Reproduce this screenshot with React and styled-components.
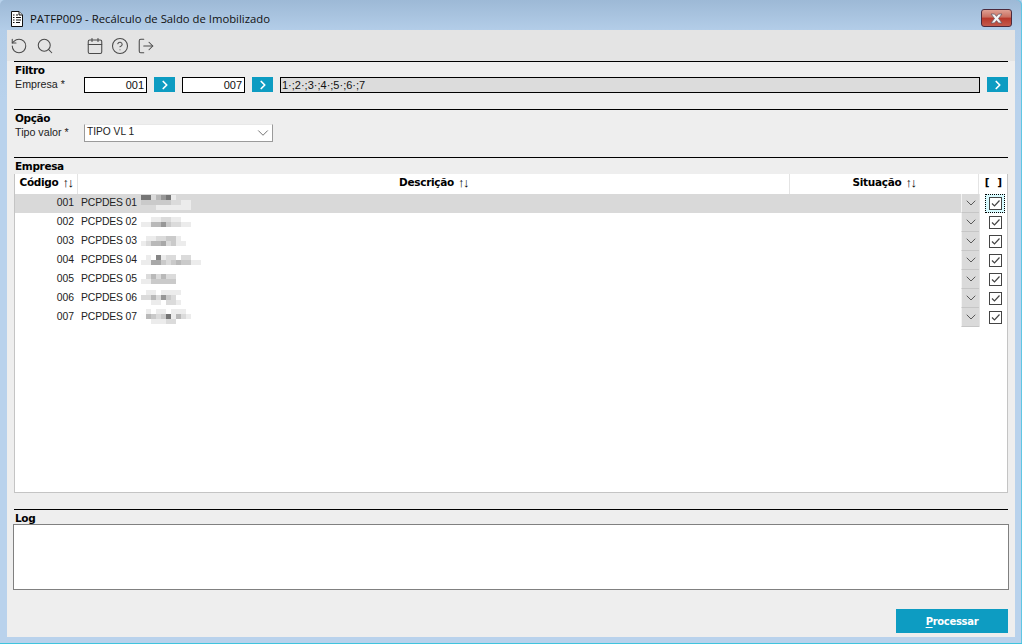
import React from 'react';
import styled, { createGlobalStyle } from 'styled-components';
import { RotateCcw, Search, Calendar, CircleHelp, LogOut, ChevronRight, ChevronDown } from 'lucide-react';

const Global = createGlobalStyle`
  html, body { margin: 0; padding: 0; width: 1022px; height: 644px; overflow: hidden; background: #b9d2ec; }
  * { box-sizing: border-box; }
  body { font-family: "Liberation Sans", Arial, sans-serif; font-size: 11px; color: #111; }
`;

const Win = styled.div`
  width: 1022px; height: 644px; display: flex; flex-direction: column;
  padding: 0 7px 6px;
  background: linear-gradient(180deg, #9db9d6 0, #b3cde8 30px, #b9d2ec 100px);
  border-bottom: 1px solid #3fc4de;
  box-shadow: inset -1px 0 0 #5fc6e4;
  border-radius: 5px 5px 0 0;
`;
const TitleBar = styled.div`
  height: 30px; display: flex; align-items: center; flex: none; padding-left: 4px; padding-top: 7px; position: relative;
`;
const TitleText = styled.span`
  margin-left: 7px; font-family: "Open Sans", "Noto Sans", sans-serif; font-size: 11.3px; color: #111;
`;
const CloseButton = styled.div`
  position: absolute; right: 3px; top: 9px; width: 31px; height: 18px; border: 1px solid #4c2a3c; border-radius: 3px;
  background: linear-gradient(180deg, #dfa093 0, #c96e5f 45%, #b8372a 50%, #c45a4c 100%);
  display: flex; align-items: center; justify-content: center;
`;
const Client = styled.div`
  flex: 1; min-height: 0; background: #eeeeee; display: flex; flex-direction: column;
`;
const Toolbar = styled.div`
  height: 31px; background: #e4e4e4; display: flex; align-items: center; padding: 1px 0 0 3px; flex: none; color: #4a4a4a;
`;
const ToolIcon = styled.span`
  display: flex; width: 18px; height: 18px; margin-left: ${p => p.$gap}px; align-items: center; justify-content: center;
`;
const Section = styled.section`
  flex: none; margin: 0 7px; height: ${p => p.$h}px; border-top: 1px solid #000;
`;
const SectionTitle = styled.div`
  font-family: "DejaVu Sans", sans-serif; font-weight: 700; font-size: 10.5px; height: ${p => p.$h || 15}px; line-height: 15px;
  padding: 1px 0 0 1px; color: #000; letter-spacing: -0.35px;
`;
const FormRow = styled.div`
  display: flex; align-items: center; height: 16px;
`;
const Label = styled.label`
  width: 70px; padding: 0 0 3px 1px; flex: none; font-size: 10.7px; color: #222;
`;
const NumInput = styled.div`
  width: 63px; height: 16px; border: 1px solid #000; background: #fff; text-align: right; line-height: 15px;
  padding-right: 2px; font-size: 11px; flex: none;
`;
const GoButton = styled.div`
  width: 21px; height: 15px; margin: 0 7px; flex: none; align-self: flex-start; background: #0d9cc2; color: #fff;
  display: flex; align-items: center; justify-content: center;
  margin-right: ${p => p.$mr ?? 7}px;
`;
const ListInput = styled.div`
  width: 700px; height: 16px; border: 1px solid #000; background: #dcdcdc; padding-left: 1px; line-height: 15px;
  font-size: 11px; flex: none;
`;
const SelectBox = styled.div`
  width: 189px; height: 18px; margin-top: -1px; background: #fff; border: 1px solid #9a9a9a; border-top-color: #e8e8e8;
  display: flex; align-items: center; justify-content: space-between; padding: 0 0 0 2px; font-size: 10.2px; color: #222; flex: none;
  span { padding-bottom: 3px; }
`;
const TableWrap = styled.div`
  height: 319px; margin-top: 1px; background: #fff; border: 1px solid #c4c4c4; border-top: 0; display: flex; flex-direction: column;
`;
const Head = styled.div`
  display: grid; grid-template-columns: 63px 712px 189px 1fr; height: 20px; flex: none;
`;
const HeadCell = styled.div`
  font-family: "DejaVu Sans", sans-serif; font-weight: 700; font-size: 10.5px; letter-spacing: -0.3px; color: #000; display: flex;
  align-items: center; justify-content: center; border-right: 1px solid #e4e4e4; line-height: 1; padding-bottom: 3px;
  &:last-child { border-right: 0; letter-spacing: 2px; padding-left: 3px; }
`;
const SortMark = styled.span`
  font-family: "Liberation Sans", sans-serif; font-weight: 400; font-size: 13px; letter-spacing: -1.5px; margin-left: 4px;
`;
const Row = styled.div`
  display: grid; grid-template-columns: 63px 883px 18px 1fr; height: 19px; flex: none;
`;
const Cell = styled.div`
  display: flex; align-items: center; font-size: 10.4px; color: #222; padding-bottom: 2px; white-space: nowrap;
  background: ${p => p.$sel ? '#d9d9d9' : '#fff'};
`;
const CodeCell = styled(Cell)`
  justify-content: flex-end; padding-right: 4px;
`;
const DescCell = styled(Cell)`
  padding-left: 3px; gap: 4px; letter-spacing: -0.15px;
`;
const ArrowCell = styled.div`
  background: #dadada; border-bottom: 1px solid #c6c6c6; border-left: 1px solid #f4f4f4; display: flex; align-items: center;
  justify-content: center; color: #444;
`;
const CheckCell = styled.div`
  display: flex; align-items: center; justify-content: center; padding-left: 3px; border-left: 1px solid #e4e4e4;
`;
const CheckFocus = styled.div`
  width: 20px; height: 19px; display: flex; align-items: center; justify-content: center;
  ${p => p.$focus && 'background:#d8fbff; outline: 1px dotted #000; outline-offset: -1px;'}
`;
const CheckBox = styled.div`
  width: 13px; height: 13px; border: 1px solid #444; background: #fff; display: flex; align-items: center; justify-content: center;
`;
const LogArea = styled.div`
  position: relative; height: 66px; margin: 0 -1px; background: #fff; border: 1px solid #808080;
`;
const Footer = styled.div`
  display: flex; justify-content: flex-end; padding: 19px 7px 0;
`;
const PrimaryButton = styled.div`
  width: 112px; height: 24px; background: #0d9cc2; color: #fff; display: flex; align-items: center; justify-content: center;
  font-family: "DejaVu Sans", sans-serif; font-weight: 700; font-size: 10px; letter-spacing: -0.3px;
  u { text-underline-offset: 2px; }
`;

const DocIcon = () => (
  <svg width="12" height="16" viewBox="0 0 12 16">
    <path d="M.5.5H8L11.500 4V15.500H.5Z" fill="#fff" stroke="#111" />
    <path d="M8 .5V4H11.500" fill="#ddd" stroke="#111" />
    <path d="M2 4H3.500M2 6.500H3.500M2 9H3.500M2 11.500H3.500M5 6.500H10M5 9H10M5 11.500H9M5 4H7" stroke="#111" strokeWidth="1.2" />
  </svg>
);
const CloseX = () => (
  <svg width="17" height="11" viewBox="0 0 17 11">
    <path d="M3 1H6.500L8.500 3.400L10.500 1H14L10.500 5.500L14 10H10.500L8.500 7.600L6.500 10H3L6.500 5.500Z" fill="#f4f4f4" stroke="#6b5a66" strokeWidth="0.8" />
  </svg>
);
const Sort = () => <SortMark>↑↓</SortMark>;
const Check = () => (
  <svg width="11" height="11" viewBox="0 0 11 11"><path d="M2 5.500L4.500 8L9.500 2.500" fill="none" stroke="#444" strokeWidth="1.200" /></svg>
);

const Blur = ({ lines }) => {
  const w = Math.max(...lines.map(l => l.length)) * 5;
  return (
    <svg width={w} height={lines.length * 5} viewBox={`0 0 ${w} ${lines.length * 5}`} shapeRendering="crispEdges" aria-hidden="true">
      {lines.map((l, y) => l.split('').map((c, x) => {
        if (c === '.') return null;
        const g = 100 + +c * 17;
        return <rect key={`${x}-${y}`} x={x * 5} y={y * 5} width="5" height="5" fill={`rgb(${g},${g},${g})`} />;
      }))}
    </svg>
  );
};

const rows = [
  ['001', ['1175318', '6666667788', '...8888888']],
  ['002', ['..887788', '8855367788', '']],
  ['003', ['.8877668', '875547688', '']],
  ['004', ['.8.2877.77', '884467656688', '']],
  ['005', ['.757577', '8866666', '']],
  ['006', ['.88.8888', '7757367', '..88.778']],
  ['007', ['.8.88.888', '9567618578', '..88877']],
];

export default function App() {
  return (
    <Win>
      <Global />
      <TitleBar>
        <DocIcon />
        <TitleText>PATFP009 - Recálculo de Saldo de Imobilizado</TitleText>
        <CloseButton><CloseX /></CloseButton>
      </TitleBar>
      <Client>
        <Toolbar>
          <ToolIcon $gap={0}><RotateCcw size={18} strokeWidth={1.4} /></ToolIcon>
          <ToolIcon $gap={8}><Search size={18} strokeWidth={1.4} /></ToolIcon>
          <ToolIcon $gap={32}><Calendar size={18} strokeWidth={1.4} /></ToolIcon>
          <ToolIcon $gap={7}><CircleHelp size={18} strokeWidth={1.4} /></ToolIcon>
          <ToolIcon $gap={8}><LogOut size={18} strokeWidth={1.4} /></ToolIcon>
        </Toolbar>
        <Section $h={48}>
          <SectionTitle>Filtro</SectionTitle>
          <FormRow>
            <Label>Empresa *</Label>
            <NumInput>001</NumInput>
            <GoButton><ChevronRight size={14} strokeWidth={3} /></GoButton>
            <NumInput>007</NumInput>
            <GoButton><ChevronRight size={14} strokeWidth={3} /></GoButton>
            <ListInput>1·;2·;3·;4·;5·;6·;7</ListInput>
            <GoButton $mr={0}><ChevronRight size={14} strokeWidth={3} /></GoButton>
          </FormRow>
        </Section>
        <Section $h={48}>
          <SectionTitle>Opção</SectionTitle>
          <FormRow>
            <Label>Tipo valor *</Label>
            <SelectBox><span>TIPO VL 1</span><ChevronDown size={18} strokeWidth={1} color="#444" /></SelectBox>
          </FormRow>
        </Section>
        <Section $h={352}>
          <SectionTitle>Empresa</SectionTitle>
          <TableWrap>
            <Head>
              <HeadCell>Código<Sort /></HeadCell>
              <HeadCell>Descrição<Sort /></HeadCell>
              <HeadCell>Situação<Sort /></HeadCell>
              <HeadCell>[ ]</HeadCell>
            </Head>
            {rows.map(([code, lines], i) => (
              <Row key={code}>
                <CodeCell $sel={i === 0}>{code}</CodeCell>
                <DescCell $sel={i === 0}>PCPDES {code.slice(1)}<Blur lines={lines.filter(Boolean)} /></DescCell>
                <ArrowCell><ChevronDown size={16} strokeWidth={1.3} /></ArrowCell>
                <CheckCell>
                  <CheckFocus $focus={i === 0}><CheckBox><Check /></CheckBox></CheckFocus>
                </CheckCell>
              </Row>
            ))}
          </TableWrap>
        </Section>
        <Section $h={81}>
          <SectionTitle $h={14}>Log</SectionTitle>
          <LogArea />
        </Section>
        <Footer><PrimaryButton><span><u>P</u>rocessar</span></PrimaryButton></Footer>
      </Client>
    </Win>
  );
}
